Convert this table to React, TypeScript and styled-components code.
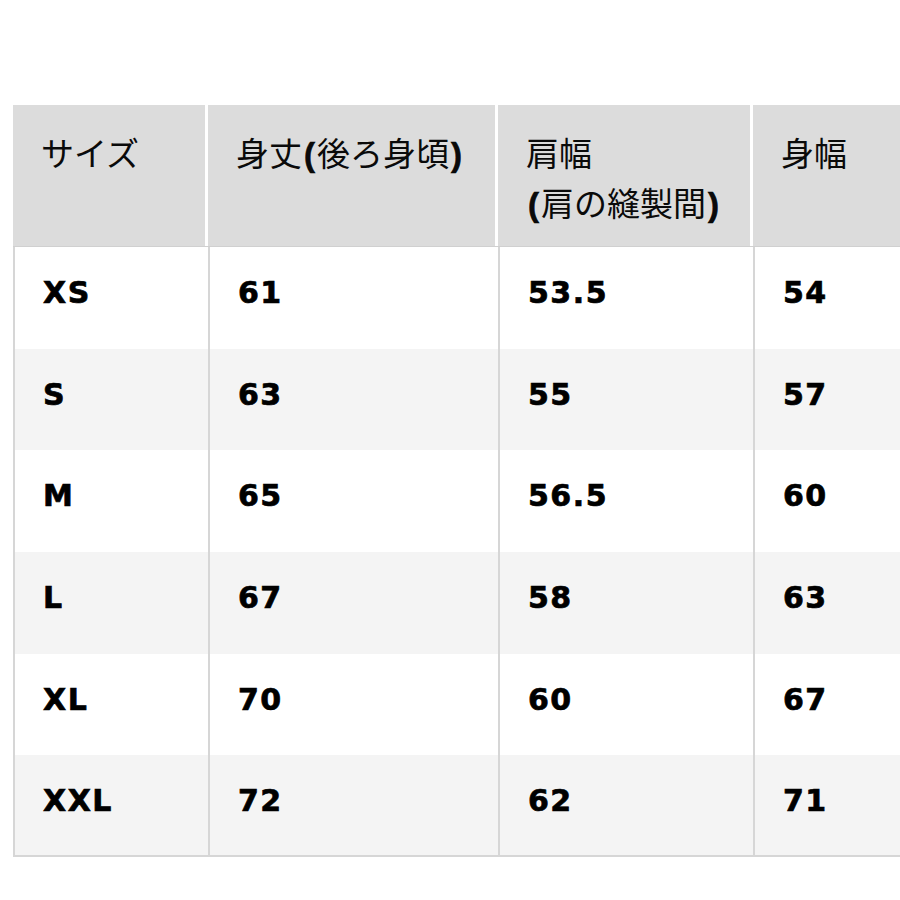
import React from "react";
import styled, { createGlobalStyle } from "styled-components";

const Global = createGlobalStyle`
  html, body {
    margin: 0;
    padding: 0;
    background: #ffffff;
    overflow: hidden;
  }
`;

const Page = styled.div`
  width: 900px;
  height: 900px;
  overflow: hidden;
  padding: 105px 0 0 13px;
  box-sizing: border-box;
  background: #ffffff;
`;

const Table = styled.div`
  width: 992px;
  display: flex;
  flex-direction: column;
  color: #000000;
`;

const COLS = "195px 290px 255px 252px";

const HeaderRow = styled.div`
  display: grid;
  grid-template-columns: ${COLS};
  height: 142px;
  background: #ffffff;
  border-bottom: 1px solid #d0d0d0;
  box-sizing: border-box;
`;

const HeaderCell = styled.div`
  background: #dcdcdc;
  border-right: 3px solid #ffffff;
  padding: 22px 0 0 28px;
  font-family: "Noto Sans CJK JP", "Noto Sans", sans-serif;
  font-size: 33px;
  line-height: 50px;
  font-weight: 400;
  color: #0a0a0a;
  box-sizing: border-box;
  &:last-child {
    border-right: none;
  }
`;

const Paren = styled.span`
  font-family: "Liberation Sans", Arial, sans-serif;
  font-weight: 700;
  -webkit-text-stroke: 0.6px #000;
  margin: 0 2px;
`;

const DataRow = styled.div<{ $striped: boolean; $last: boolean }>`
  display: grid;
  grid-template-columns: ${COLS};
  height: 101.7px;
  background: ${(p) => (p.$striped ? "#f4f4f4" : "#ffffff")};
  border-left: 2px solid #d6d6d6;
  border-bottom: ${(p) => (p.$last ? "2px solid #d6d6d6" : "none")};
  box-sizing: border-box;
`;

const DataCell = styled.div`
  border-right: 2px solid #d6d6d6;
  padding: 26px 0 0 28px;
  font-family: "DejaVu Sans", "Liberation Sans", sans-serif;
  font-weight: 700;
  font-size: 30px;
  line-height: 40px;
  letter-spacing: 1.5px;
  -webkit-text-stroke: 0.7px #000;
  box-sizing: border-box;
  &:last-child {
    border-right: none;
  }
`;

const rows: string[][] = [
  ["XS", "61", "53.5", "54"],
  ["S", "63", "55", "57"],
  ["M", "65", "56.5", "60"],
  ["L", "67", "58", "63"],
  ["XL", "70", "60", "67"],
  ["XXL", "72", "62", "71"],
];

export default function App() {
  return (
    <>
      <Global />
      <Page>
        <Table>
          <HeaderRow>
            <HeaderCell>サイズ</HeaderCell>
            <HeaderCell>
              身丈<Paren>(</Paren>後ろ身頃<Paren>)</Paren>
            </HeaderCell>
            <HeaderCell>
              肩幅
              <br />
              <Paren>(</Paren>肩の縫製間<Paren>)</Paren>
            </HeaderCell>
            <HeaderCell>身幅</HeaderCell>
          </HeaderRow>
          {rows.map((r, i) => (
            <DataRow key={r[0]} $striped={i % 2 === 1} $last={i === rows.length - 1}>
              {r.map((c, j) => (
                <DataCell key={j}>{c}</DataCell>
              ))}
            </DataRow>
          ))}
        </Table>
      </Page>
    </>
  );
}
